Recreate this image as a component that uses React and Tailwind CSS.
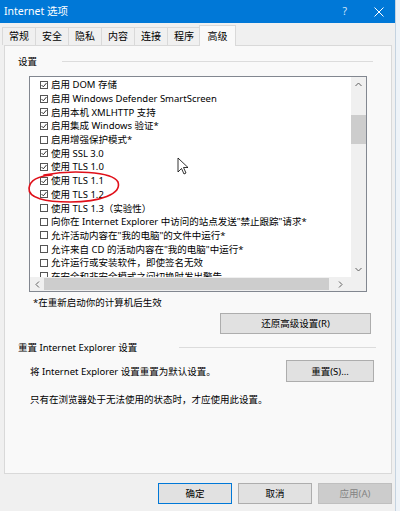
import React from "react";

const FONT = { fontFamily: '"Noto Sans", "Noto Sans CJK SC", sans-serif' };

const items = [
  [true, "启用 DOM 存储"],
  [true, "启用 Windows Defender SmartScreen"],
  [true, "启用本机 XMLHTTP 支持"],
  [true, "启用集成 Windows 验证*"],
  [false, "启用增强保护模式*"],
  [true, "使用 SSL 3.0"],
  [true, "使用 TLS 1.0"],
  [true, "使用 TLS 1.1"],
  [true, "使用 TLS 1.2"],
  [false, "使用 TLS 1.3（实验性）"],
  [false, "向你在 Internet Explorer 中访问的站点发送\"禁止跟踪\"请求*"],
  [false, "允许活动内容在\"我的电脑\"的文件中运行*"],
  [false, "允许来自 CD 的活动内容在\"我的电脑\"中运行*"],
  [false, "允许运行或安装软件，即使签名无效"],
  [false, "在安全和非安全模式之间切换时发出警告"],
];

function Box({ checked }) {
  return (
    <span className="inline-flex h-[8px] w-[8px] shrink-0 items-center justify-center border border-[#555]">
      {checked && (
        <svg width="6" height="6" viewBox="0 0 6 6">
          <path d="M0.5 3 L2.3 4.8 L5.5 1" fill="none" stroke="#333" strokeWidth="1" />
        </svg>
      )}
    </span>
  );
}

const tabs = ["常规", "安全", "隐私", "内容", "连接", "程序"];

export default function App() {
  return (
    <div className="relative flex h-[511px] w-[400px] overflow-hidden bg-[#eef3f8] text-[9.5px] leading-[13px] text-black" style={FONT}>
      <div className="flex h-full w-[395px] flex-col bg-[#f0f0f0]">
        {/* title bar */}
        <div className="flex h-[23px] shrink-0 items-center bg-[#0078d7] pl-[4px] text-[10.5px] text-white">
          <span>Internet 选项</span>
          <span className="ml-auto mr-[27px] text-[10.5px] text-[#cfe4f7]">?</span>
          <svg className="mr-[11px]" width="10" height="10" viewBox="0 0 10 10">
            <path d="M0.5 0.5 L9.5 9.5 M9.5 0.5 L0.5 9.5" stroke="#ffffff" strokeWidth="1" />
          </svg>
        </div>
        {/* tabs */}
        <div className="relative z-10 flex h-[22px] shrink-0 items-end pl-[2px] text-[10px]">
          {tabs.map((t) => (
            <div key={t} className="-mr-px flex h-[18px] w-[34px] items-center justify-center border border-b-0 border-[#d9d9d9] bg-[#f0f0f0] pb-[1px]">
              {t}
            </div>
          ))}
          <div className="-mb-px ml-[-1px] flex h-[21px] w-[37px] items-center justify-center border border-b-0 border-[#d9d9d9] bg-[#f9f9f9] pt-[1px]">
            高级
          </div>
        </div>
        {/* panel */}
        <div className="ml-[4px] flex h-[429px] w-[388px] shrink-0 flex-col border border-[#d9d9d9] bg-[#f9f9f9]">
          <div className="mt-[8px] flex h-[14px] items-center">
            <span className="ml-[13px]">设置</span>
            <div className="ml-[25px] h-px w-[311px] bg-[#dcdcdc]" />
          </div>
          {/* listbox */}
          <div className="ml-[24px] mt-[8px] flex h-[216px] w-[338px] flex-col border border-[#828790] bg-white">
            <div className="flex h-[200px]">
              <div className="w-[321px] overflow-hidden pt-[1px]">
                {items.map(([c, t], i) => (
                  <div key={i} className="flex h-[13.7px] items-center gap-[3px] whitespace-nowrap pl-[10px]">
                    <Box checked={c} />
                    <span>{t}</span>
                  </div>
                ))}
              </div>
              <div className="flex w-[15px] flex-col bg-[#f0f0f0]">
                <div className="flex h-[15px] items-center justify-center">
                  <svg width="7" height="5" viewBox="0 0 7 5"><path d="M0.5 4 L3.5 1 L6.5 4" fill="none" stroke="#606060" strokeWidth="1" /></svg>
                </div>
                <div className="mt-[23px] h-[29px] w-full bg-[#cdcdcd]" />
                <div className="mt-auto flex h-[15px] items-center justify-center">
                  <svg width="7" height="5" viewBox="0 0 7 5"><path d="M0.5 1 L3.5 4 L6.5 1" fill="none" stroke="#606060" strokeWidth="1" /></svg>
                </div>
              </div>
            </div>
            <div className="flex h-[14px] bg-[#f0f0f0]">
              <div className="flex w-[14px] items-center justify-center">
                <svg width="5" height="7" viewBox="0 0 5 7"><path d="M4 0.5 L1 3.5 L4 6.5" fill="none" stroke="#606060" strokeWidth="1" /></svg>
              </div>
              <div className="my-px w-[285px] bg-[#cdcdcd]" />
              <div className="flex w-[22px] items-center justify-center">
                <svg width="5" height="7" viewBox="0 0 5 7"><path d="M1 0.5 L4 3.5 L1 6.5" fill="none" stroke="#606060" strokeWidth="1" /></svg>
              </div>
              <div className="w-[15px] bg-[#f0f0f0]" />
            </div>
          </div>
          <div className="ml-[28px] mt-[4px] h-[14px] leading-[14px]">*在重新启动你的计算机后生效</div>
          <div className="ml-[215px] mt-[3px] flex h-[21px] w-[151px] items-center justify-center border border-[#adadad] bg-[#e1e1e1]">
            还原高级设置(R)
          </div>
          <div className="mt-[6px] flex h-[14px] items-center">
            <span className="ml-[13px]">重置 Internet Explorer 设置</span>
            <div className="ml-auto mr-[15px] h-px w-[197px] bg-[#dcdcdc]" />
          </div>
          <div className="mt-[6px] flex h-[22px] items-center">
            <span className="ml-[25px]">将 Internet Explorer 设置重置为默认设置。</span>
            <div className="ml-auto mr-[17px] flex h-[22px] w-[88px] items-center justify-center border border-[#adadad] bg-[#e1e1e1]">
              重置(S)...
            </div>
          </div>
          <div className="ml-[25px] mt-[11px] h-[14px] leading-[14px]">只有在浏览器处于无法使用的状态时，才应使用此设置。</div>
        </div>
        {/* bottom buttons */}
        <div className="mt-[9px] flex gap-[6px] pl-[158px]">
          <div className="flex h-[21px] w-[74px] items-center justify-center border border-[#0078d7] bg-[#e1e1e1]">确定</div>
          <div className="flex h-[21px] w-[74px] items-center justify-center border border-[#adadad] bg-[#e1e1e1]">取消</div>
          <div className="flex h-[21px] w-[74px] items-center justify-center border border-[#bfbfbf] bg-[#cccccc] text-[#838383]">应用(A)</div>
        </div>
      </div>
      <div className="h-full w-px bg-[#c5d3e0]" />

      {/* red annotation ellipse */}
      <svg className="pointer-events-none absolute left-0 top-0" width="400" height="511" viewBox="0 0 400 511">
        <path
          d="M44 175 C70 170, 112 171, 118 182 C122 194, 100 202, 70 202 C45 202, 28 198, 29 188 C30 180, 38 176, 52 175"
          fill="none"
          stroke="#e0101a"
          strokeWidth="1.6"
          strokeLinecap="round"
        />
        {/* mouse cursor */}
        <path d="M178 158 L178 172 L181.5 168.5 L184 174 L186 173 L183.5 167.5 L188 167.5 Z" fill="#ffffff" stroke="#000" strokeWidth="0.8" strokeLinejoin="round" />
      </svg>
    </div>
  );
}
